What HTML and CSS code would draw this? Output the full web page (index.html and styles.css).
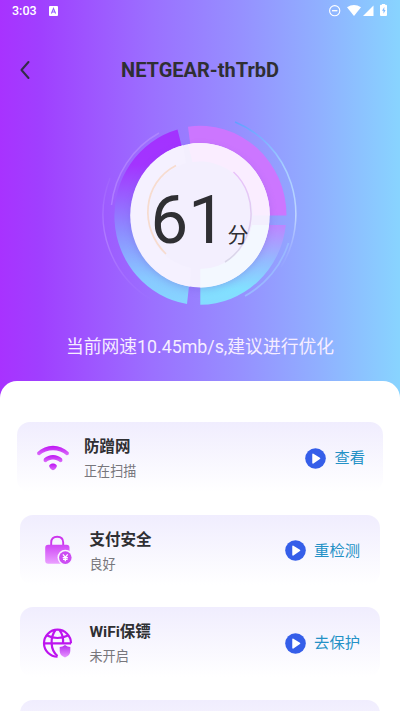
FILE: index.html
```html
<!DOCTYPE html>
<html lang="zh-CN">
<head>
<meta charset="utf-8">
<title>NETGEAR-thTrbD</title>
<link rel="stylesheet" href="styles.css">
</head>
<body>
<div class="screen">
  <div class="status">
    <span class="clock">3:03</span>
    <svg class="input-badge" width="9" height="10" viewBox="0 0 9 10"><rect width="9" height="10" rx="1" fill="#fff"/><path d="M2.4 7.5 4.5 2.5 6.6 7.5M3.2 6h2.6" fill="none" stroke="#9460ff" stroke-width="1.1"/></svg>
    <svg class="system" width="62" height="14" viewBox="328 3 62 14">
      <circle cx="334.7" cy="10.7" r="5.1" fill="none" stroke="#fff" stroke-width="1.1"/>
      <path d="M332 10.7h5.4" stroke="#fff" stroke-width="1.3"/>
      <path d="M347 7.3Q354 2.6 361 7.3L354 16Z" fill="#fff"/>
      <path d="M373.5 5.5V16H363Z" fill="#fff"/>
      <path d="M382 4.8h0V4h3v.8h1q1 0 1 1V15q0 1-1 1h-5q-1 0-1-1V5.800q0-1 1-1Z" fill="#fff"/>
      <path d="M384.3 7 382 10.8h1.5v3L385.600 10H384.300Z" fill="#80baff"/>
    </svg>
  </div>
  <header class="title-bar">
    <svg class="back" width="12" height="20" viewBox="0 0 12 20"><path d="M9.500 2 2.500 10 9.500 18" fill="none" stroke="#332c48" stroke-width="2" stroke-linecap="round" stroke-linejoin="round"/></svg>
    <h1>NETGEAR-thTrbD</h1>
  </header>
  <section class="gauge">
    <svg width="210" height="210" viewBox="95 110 210 210">
      <defs>
        <linearGradient id="left" x1="0" y1="0" x2="0" y2="1"><stop offset="0" stop-color="#a332ff"/><stop offset=".2" stop-color="#a334ff"/><stop offset=".58" stop-color="#8d8cff"/><stop offset=".85" stop-color="#88c8ff"/><stop offset="1" stop-color="#86d6ff"/></linearGradient>
        <linearGradient id="right" x1="0" y1="0" x2="0" y2="1"><stop offset="0" stop-color="#bd85ff"/><stop offset=".45" stop-color="#94baff"/><stop offset=".8" stop-color="#82e0ff"/><stop offset="1" stop-color="#84dcff"/></linearGradient>
        <linearGradient id="trace" x1="0" y1="0" x2="0" y2="1"><stop offset="0" stop-color="#62a0ff"/><stop offset=".3" stop-color="#a5ceff"/><stop offset=".65" stop-color="#c0d6ff"/><stop offset="1" stop-color="#a5b6ff" stop-opacity=".1"/></linearGradient>
        <linearGradient id="fade" x1="0" y1="0" x2="0" y2="1"><stop offset="0" stop-color="#c19aff" stop-opacity=".1"/><stop offset=".5" stop-color="#c19aff" stop-opacity=".5"/><stop offset="1" stop-color="#c19aff" stop-opacity="0"/></linearGradient>
        <linearGradient id="inner" x1="0" y1="0" x2="0" y2="1"><stop offset="0" stop-color="#e8c2fa"/><stop offset="1" stop-color="#d9d7e8"/></linearGradient>
        <filter id="shadow" x="-20%" y="-20%" width="140%" height="140%"><feGaussianBlur stdDeviation="4"/></filter>
      </defs>
      <path d="M177.500 129.500A86.500 89.500 0 0 0 187 304L191 268A53 54 0 0 1 186 163Z" fill="url(#left)"/>
      <path d="M188 126.700A86.500 89.500 0 0 1 286.500 215.500H253A53 54 0 0 0 192.500 162Z" fill="#cc76ff"/>
      <path d="M285.800 225A86.500 89.500 0 0 1 200.300 304.800V269A53 54 0 0 0 252 225Z" fill="url(#right)"/>
      <path d="M159 133A92 94 0 0 0 111.500 205" fill="none" stroke="#c19aff" stroke-opacity=".5" stroke-width="1.500"/>
      <path d="M110 178A96 98 0 0 0 154 301" fill="none" stroke="url(#fade)" stroke-width="1.400"/>
      <path d="M235 122A96 99 0 0 1 281 267" fill="none" stroke="url(#trace)" stroke-width="1.500"/>
      <path d="M288.500 243A91 93 0 0 1 245 296" fill="none" stroke="#9ab8ff" stroke-width="1.700"/>
      <ellipse cx="200" cy="218" rx="69" ry="71" fill="#6650cf" opacity=".3" filter="url(#shadow)"/>
      <ellipse cx="200" cy="215.300" rx="69.800" ry="72.200" fill="#f3effe"/>
      <path d="M183 145.300A69.800 72.200 0 0 0 190 286.500L191 268A53 54 0 0 1 186 163Z" fill="#f5f1ff"/>
      <path d="M188 144.200A69.800 72.200 0 0 1 269.800 215.500H253A53 54 0 0 0 192.500 162Z" fill="#faedff"/>
      <path d="M269 225A69.800 72.200 0 0 1 200.300 287.500V269A53 54 0 0 0 252 225Z" fill="#f3f8ff"/>
      <path d="M176 165.500C142 183 139 228 166 254" fill="none" stroke="#f7dccf" stroke-width="1.700"/>
      <path d="M233.500 172C260 196 256 243 225 262" fill="none" stroke="url(#inner)" stroke-width="1.500"/>
    </svg>
    <div class="score"><span class="value">61</span><span class="unit">分</span></div>
  </section>
  <p class="summary">当前网速10.45mb/s,建议进行优化</p>
  <main class="sheet">
    <article class="card wide">
      <svg class="icon" width="34" height="34" viewBox="0 0 34 34">
        <defs><linearGradient id="w1" x1="0" y1="0" x2="0" y2="1"><stop offset="0" stop-color="#bd12f4"/><stop offset="1" stop-color="#dc70fa"/></linearGradient></defs>
        <path d="M1.300 11.300C10 2.500 24 2.500 32.700 11.300Q33.500 14.500 30.500 14.300C23 7.500 11 7.500 3.500 14.300Q.5 14.500 1.300 11.300Z" fill="url(#w1)"/>
        <path d="M8 17.500C13 12.700 21 12.700 26 17.500Q27.500 21 24 21.300C20 17.700 14 17.700 10 21.300Q6.500 21 8 17.500Z" fill="url(#w1)"/>
        <path d="M13.300 24.300C15 22 19 22 20.700 24.300C21.500 26 18.500 29.300 17 29.300S12.500 26 13.300 24.300Z" fill="url(#w1)"/>
      </svg>
      <div class="copy"><h2>防蹭网</h2><p>正在扫描</p></div>
      <a class="action"><svg width="21" height="21" viewBox="0 0 21 21"><circle cx="10.500" cy="10.500" r="10.300" fill="#355ee9"/><path d="M8 6.300 14.500 10.500 8 14.900Z" fill="#fff" stroke="#fff" stroke-width="1.500" stroke-linejoin="round"/></svg>查看</a>
    </article>
    <article class="card">
      <svg class="icon" width="34" height="34" viewBox="0 0 34 34">
        <defs><linearGradient id="w2" x1="0" y1="0" x2="0" y2="1"><stop offset="0" stop-color="#cf46f6"/><stop offset="1" stop-color="#eaa0ff"/></linearGradient></defs>
        <path d="M11.200 13V9.500Q11.200 3.800 17.200 3.800T23.200 9.500V13" fill="none" stroke="#cc35ed" stroke-width="1.900"/>
        <rect x="5.200" y="11.700" width="24.300" height="19" rx="3" fill="url(#w2)"/>
        <circle cx="25.300" cy="24.600" r="7.800" fill="#f9f6ff"/>
        <circle cx="25.300" cy="24.600" r="6.300" fill="#cc4cf3"/>
        <path d="M22.900 21.300 25.300 24.200 27.700 21.300M22.700 24.500h5.200M23 26.300h4.600M25.300 24V28.300" fill="none" stroke="#fff" stroke-width="1.250"/>
      </svg>
      <div class="copy"><h2>支付安全</h2><p>良好</p></div>
      <a class="action"><svg width="21" height="21" viewBox="0 0 21 21"><circle cx="10.500" cy="10.500" r="10.300" fill="#355ee9"/><path d="M8 6.300 14.500 10.500 8 14.900Z" fill="#fff" stroke="#fff" stroke-width="1.500" stroke-linejoin="round"/></svg>重检测</a>
    </article>
    <article class="card">
      <svg class="icon" width="34" height="34" viewBox="0 0 34 34">
        <defs><linearGradient id="w3" x1="0" y1="0" x2="0" y2="1"><stop offset="0" stop-color="#b62aef"/><stop offset="1" stop-color="#e797ff"/></linearGradient></defs>
        <g fill="none" stroke="#bd13ef" stroke-width="2.200"><path d="M31 18.200A13.500 13.500 0 1 0 17.500 31.700M4 18.400H31M7 10.500Q17.500 15.500 28 10.500"/><path d="M15.500 5C10 12 10 25 17.500 31M19.500 5C22.500 9 23.500 13 23 18.500"/></g>
        <path d="M25 20Q27.500 22 30.300 22V26Q30.300 30.500 25 32.500Q19.700 30.500 19.700 26V22Q22.500 22 25 20Z" fill="url(#w3)"/>
      </svg>
      <div class="copy"><h2>WiFi保镖</h2><p>未开启</p></div>
      <a class="action"><svg width="21" height="21" viewBox="0 0 21 21"><circle cx="10.500" cy="10.500" r="10.300" fill="#355ee9"/><path d="M8 6.300 14.500 10.500 8 14.900Z" fill="#fff" stroke="#fff" stroke-width="1.500" stroke-linejoin="round"/></svg>去保护</a>
    </article>
    <article class="card"></article>
  </main>
</div>
</body>
</html>
```
FILE: styles.css
```css
* { box-sizing: border-box; }
body, h1, h2, p { margin: 0; }
body { font-family: Roboto, "Noto Sans CJK SC", sans-serif; color: #2f2f33; }
.screen {
  height: 711px;
  overflow: hidden;
  background: linear-gradient(90deg, #a832ff 0, #a03fff 10%, #9b70ff 38%, #9690ff 60%, #90b0ff 80%, #88d4ff 100%);
}
.status { height: 22px; display: flex; align-items: center; padding: 0 10px 0 12px; color: #fff; }
.clock { width: 37px; font-size: 12.5px; font-weight: 500; line-height: 22px; }
.system { margin-left: auto; margin-top: -2px; }
.title-bar { height: 96px; display: grid; grid-template-columns: 40px 1fr 40px; align-items: center; }
.back { margin-left: 19px; }
h1 { text-align: center; font-size: 20px; font-weight: 700; line-height: 26px; }
.gauge { position: relative; width: 210px; height: 210px; margin: -8px auto 0; }
.gauge svg { display: block; }
.score { position: absolute; left: 55.5px; top: 71px; display: flex; align-items: baseline; line-height: 78px; }
.value { width: 77px; font-size: 67px; }
.unit { font-size: 21px; transform: translateY(-1px); }
.summary { height: 60px; padding-top: 14px; text-align: center; color: #f6edff; font-size: 17.8px; line-height: 26px; white-space: nowrap; }
.sheet { height: 331px; margin-top: 0.5px; padding: 41.5px 20px 0; border-radius: 17px 17px 0 0; background: #fff; overflow: hidden; }
.card {
  height: 70px;
  margin-bottom: 22.4px;
  padding: 0 20px;
  border-radius: 13px;
  display: flex;
  align-items: center;
  background: linear-gradient(#f0edfe, #fff);
}
.wide { margin: 0 -3px 22.8px; padding: 0 18px 0 19px; }
.icon { flex: none; }
.wide .icon { margin-top: 2px; }
.copy { margin: 4px 0 0 15.5px; }
.wide .copy { margin-left: 14px; }
h2 { font-size: 15.5px; font-weight: 700; line-height: 24px; margin-bottom: 2px; }
.copy p { font-size: 13.1px; line-height: 22px; color: #77767c; }
.action { margin-left: auto; display: flex; align-items: center; gap: 8.5px; color: #2491c6; font-size: 15.3px; line-height: 24px; margin-top: 2px; }
```
